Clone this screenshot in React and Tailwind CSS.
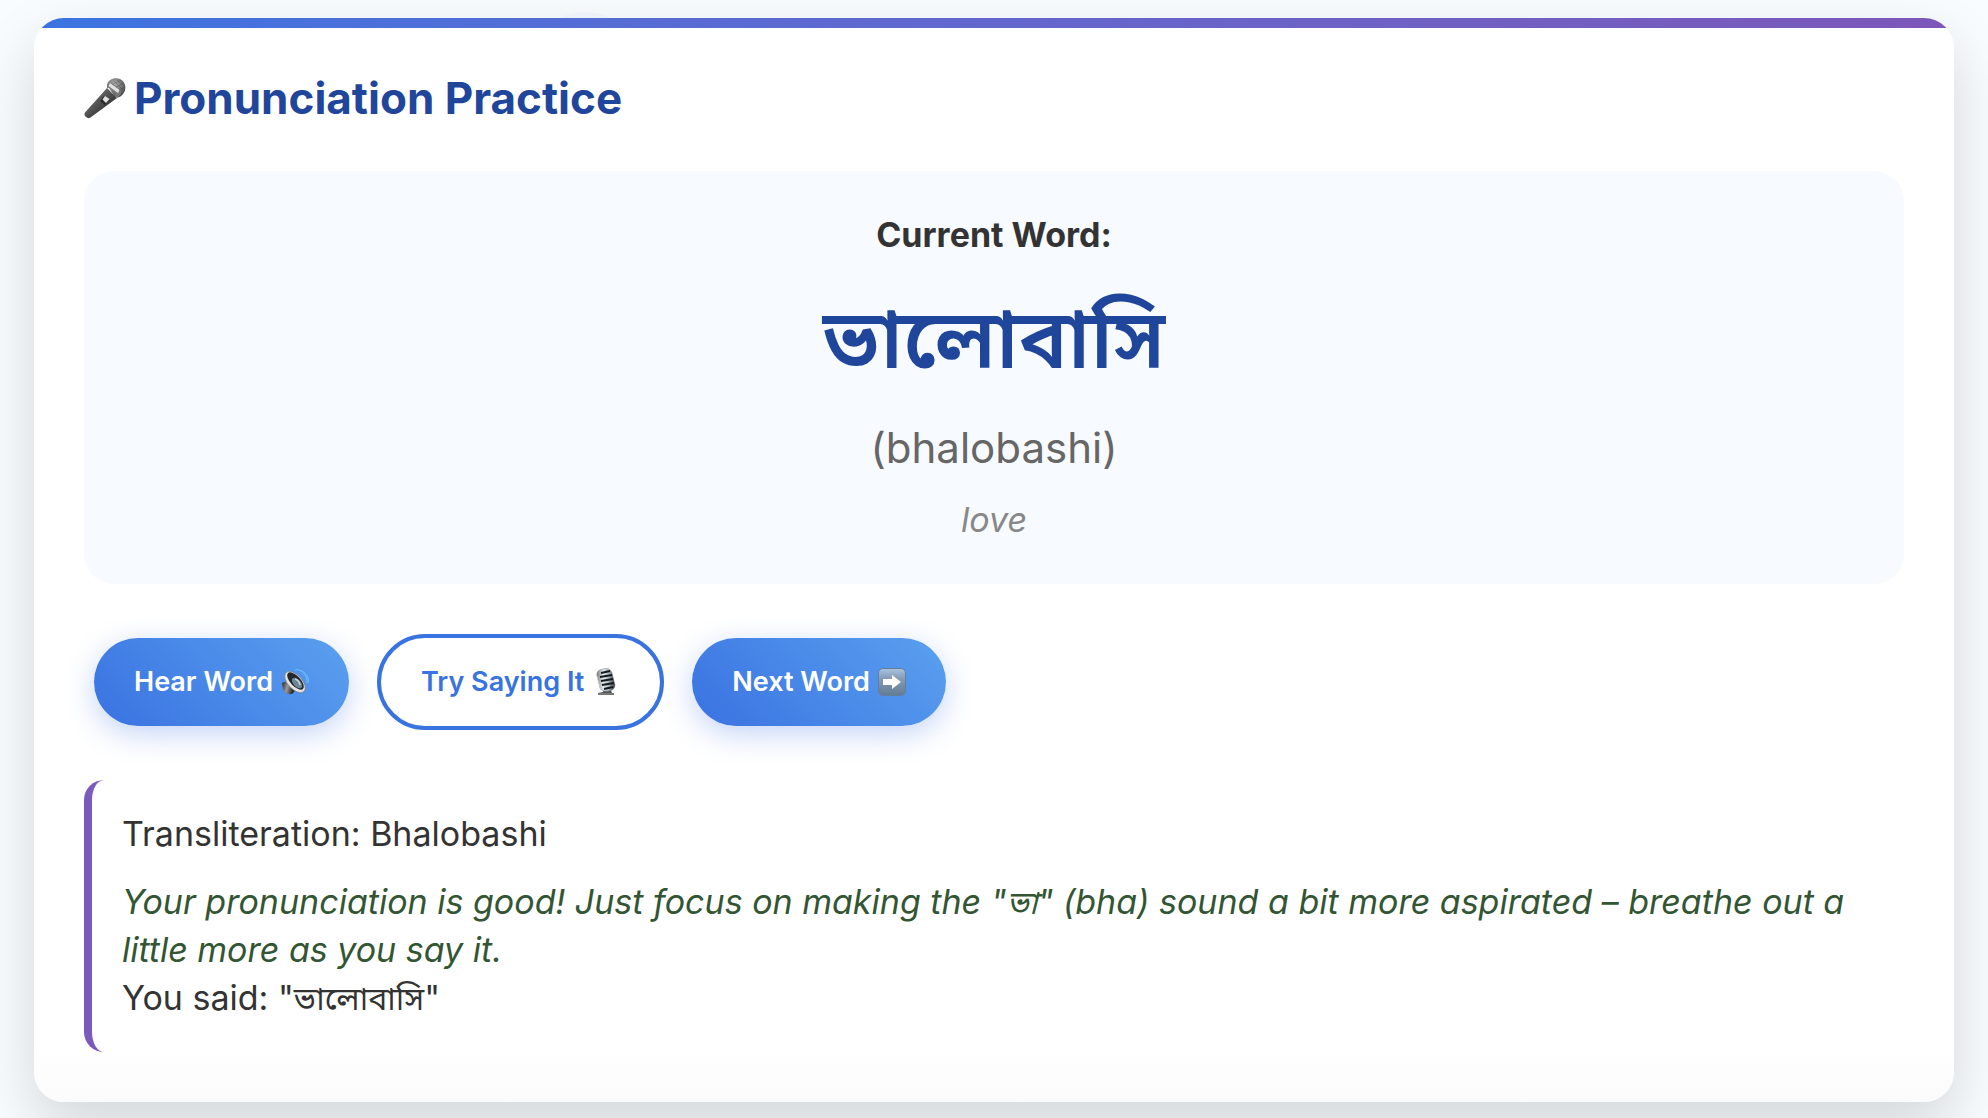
import { useId, useState } from "react";

const WORDS = [
  { bengali: "ভালোবাসি", roman: "bhalobashi", title: "Bhalobashi", meaning: "love" },
];

function MicrophoneIcon() {
  const id = useId();
  return (
    <svg viewBox="0 0 42 42" className="h-[42px] w-[42px] shrink-0" aria-hidden="true">
      <defs>
        <linearGradient id={`${id}b`} x1="0" y1="0" x2="1" y2="1">
          <stop offset="0" stopColor="#8a8a8a" />
          <stop offset="0.45" stopColor="#555" />
          <stop offset="1" stopColor="#161616" />
        </linearGradient>
        <radialGradient id={`${id}h`} cx="0.4" cy="0.3" r="0.75">
          <stop offset="0" stopColor="#aaa" />
          <stop offset="0.6" stopColor="#707070" />
          <stop offset="1" stopColor="#444" />
        </radialGradient>
      </defs>
      <path d="M23 10 L33 20 L6.500 39.500 Q4 41 2 39 Q-0.500 37 1 34.500 Z" fill={`url(#${id}b)`} />
      <path d="M20 18 L26 22 L21 27 L16 23 Z" fill="#2b2b2b" />
      <path d="M21 18 L25.500 21 L22 25 L18.500 21.500 Z" fill="#e2e2e2" />
      <path d="M23 7 C24 1 31 -1 36 1 C42 4 43 11 39 16 C37 19 34 20 31 19 Z" fill={`url(#${id}h)`} />
      <path d="M23 7 Q25 4 28 5 L37 13 Q38 16 34 19 L31 19 Q32 16 30 13 Q27 9 23 10 Z" fill="#777" />
      <path d="M26 5 L35.500 12 L34 15 L24.500 8 Z" fill="#e2e2e2" />
      <path d="M30 3 L39 12 M33 2 L40 8 M29 6 L37 2 M32 9 L40 5 M35 12 L41 9" stroke="#333" strokeWidth="0.5" opacity="0.5" />
    </svg>
  );
}

function SpeakerIcon() {
  const id = useId();
  return (
    <svg viewBox="0 0 28 28" className="h-7 w-7 shrink-0" aria-hidden="true">
      <defs>
        <linearGradient id={id} x1="0" y1="0" x2="1" y2="0.3">
          <stop offset="0" stopColor="#222" />
          <stop offset="0.5" stopColor="#999" />
          <stop offset="1" stopColor="#222" />
        </linearGradient>
      </defs>
      <path d="M1 15 Q5 12 10 15 L14 22 Q12 27 8 26 Q3 25 2 21 Z" fill={`url(#${id})`} />
      <ellipse cx="14" cy="14" rx="7" ry="13" transform="rotate(-43 14 14)" fill="#e4e4e4" stroke="#777" strokeWidth="0.6" />
      <ellipse cx="14.500" cy="13" rx="5" ry="11" transform="rotate(-43 14.500 13)" fill="#24292e" />
      <ellipse cx="16" cy="15" rx="3.500" ry="6.500" transform="rotate(-43 16 15)" fill="#6d8796" />
      <path d="M14 11 Q18 12 19 17" fill="none" stroke="#bed4df" strokeWidth="1.500" />
      <path d="M14 2 C20 0 27 8 26 15 M18 2 C24 3 29 10 27 15" fill="none" stroke="#6cc0f8" strokeWidth="1" />
    </svg>
  );
}

function StudioMicIcon() {
  const id = useId();
  return (
    <svg viewBox="0 0 28 28" className="h-7 w-7 shrink-0" aria-hidden="true">
      <defs>
        <linearGradient id={id} x1="0" y1="0" x2="1" y2="0">
          <stop offset="0" stopColor="#777" />
          <stop offset="0.35" stopColor="#e8edf0" />
          <stop offset="0.65" stopColor="#aab4bd" />
          <stop offset="1" stopColor="#333" />
        </linearGradient>
      </defs>
      <path d="M12 20 H18 L20 25 H22 V27 H6 V25 L11 24 Z" fill="#555" />
      <path d="M6 26 H22" stroke="#aaa" strokeWidth="0.8" />
      <path d="M5 8 Q4 2 11 1 Q18 -1 20 5 L23 17 Q23 22 17 23 Q10 24 8 20 Z" fill={`url(#${id})`} stroke="#777" strokeWidth="0.5" />
      <path d="M9 5 L18 3 M8 9 L20 7 M9 13 L21 11 M10 17 L22 15 M12 21 L21 19" stroke="#15191d" strokeWidth="2" />
      <path d="M5 8 L9 22" stroke="#cdd5da" strokeWidth="0.8" />
    </svg>
  );
}

function ArrowTileIcon() {
  const id = useId();
  return (
    <svg viewBox="0 0 28 28" className="h-7 w-7 shrink-0" aria-hidden="true">
      <defs>
        <linearGradient id={id} x1="0" y1="0" x2="0" y2="1">
          <stop offset="0" stopColor="#aac4df" />
          <stop offset="0.4" stopColor="#8099b5" />
          <stop offset="1" stopColor="#647b94" />
        </linearGradient>
      </defs>
      <rect x="0.500" y="0.500" width="27" height="27" rx="4.500" fill={`url(#${id})`} stroke="#667f9b" />
      <path d="M5 11 H14 V7 L23 14 L14 21 V17 H5 Z" fill="#fff" />
    </svg>
  );
}

function PracticeButton({ outlined, icon, children, onClick }) {
  return (
    <button
      type="button"
      onClick={onClick}
      className={`flex items-center gap-2 rounded-full px-10 py-6 text-[27px] leading-10 font-semibold whitespace-nowrap
        ${outlined
          ? "border-4 border-[#3973e0] bg-white text-[#3973e0]"
          : "bg-linear-45 from-[#3a72e1] to-[#5ba0ef] text-white shadow-[0_8px_30px_rgba(58,114,225,0.3)]"
        }`}
    >
      {children}
      {icon}
    </button>
  );
}

export default function App() {
  const [index, setIndex] = useState(0);
  const word = WORDS[index];

  return (
    <main className="relative min-h-screen overflow-hidden bg-[#f8fcff] px-[34px] pt-[18px] pb-4 font-['Inter','Noto_Sans_Bengali','Noto_Sans',sans-serif] text-[#333]">
      {/* Faint bubble behind the card */}
      <div className="absolute top-3 left-[530px] h-[110px] w-[110px] rounded-full bg-[#5a50e1]/3" />

      <section className="relative overflow-hidden rounded-[30px] bg-linear-to-b from-white from-95% to-[#fbfbfb] shadow-[0_25px_60px_rgba(0,0,0,0.15)]">
        <div className="h-[10px] bg-linear-to-r from-[#3a74e1] to-[#7c57b9]" />

        <div className="px-[50px] pt-10 pb-[50px]">
          <h2 className="mb-[42px] flex items-center gap-2 text-[44px] leading-[61px] font-bold text-[#1f469b]">
            <MicrophoneIcon />
            Pronunciation Practice
          </h2>

          <div className="flex flex-col items-center gap-5 rounded-[30px] bg-[#f7faff] p-10 text-center">
            <p className="text-[34px] leading-12 font-bold">Current Word:</p>
            <p lang="bn" className="text-[82px] leading-[120px] font-semibold text-[#1f469b]">{word.bengali}</p>
            <p className="text-[42px] leading-[57px] text-[#666]">({word.roman})</p>
            <p className="text-[34px] leading-12 text-[#888] italic">{word.meaning}</p>
          </div>

          <div className="my-[50px] flex flex-wrap items-center gap-7 px-[10px]">
            <PracticeButton icon={<SpeakerIcon />}>Hear Word</PracticeButton>
            <PracticeButton outlined icon={<StudioMicIcon />}>Try Saying It</PracticeButton>
            <PracticeButton
              icon={<ArrowTileIcon />}
              onClick={() => setIndex((i) => (i + 1) % WORDS.length)}
            >
              Next Word
            </PracticeButton>
          </div>

          <div className="rounded-[20px] border-l-8 border-[#7b59bd] p-[30px] text-[34px] leading-12">
            <p className="mb-5">Transliteration: {word.title}</p>
            <p className="text-[#335533] italic">
              Your pronunciation is good! Just focus on making the "<span lang="bn" className="text-[32px] leading-none">ভা</span>" (bha)
              sound a bit more aspirated – breathe out a little more as you say it.
            </p>
            <p>You said: "<span lang="bn" className="text-[32px] leading-none">{word.bengali}</span>"</p>
          </div>
        </div>
      </section>
    </main>
  );
}
